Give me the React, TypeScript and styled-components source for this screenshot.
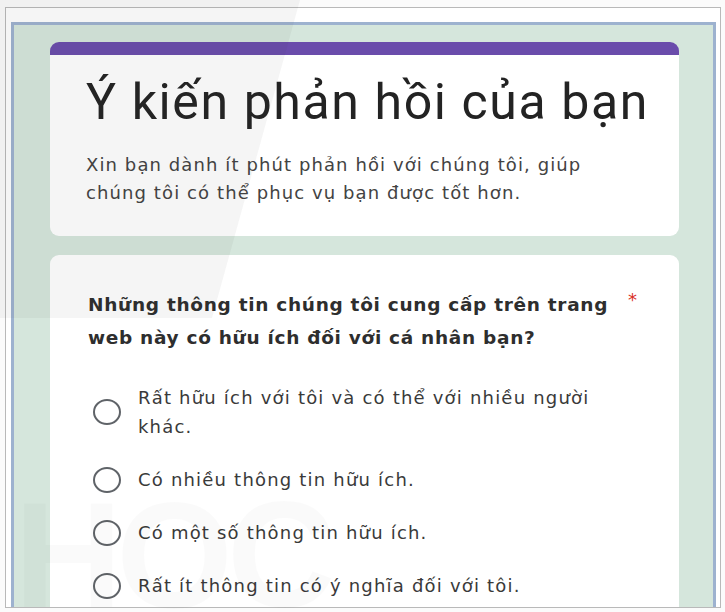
import styled, { createGlobalStyle } from 'styled-components';

const GlobalStyle = createGlobalStyle`
  html, body {
    margin: 0;
    padding: 0;
    background: #fbfbfb;
  }
  * {
    box-sizing: border-box;
  }
`;

const Page = styled.div`
  position: relative;
  width: 725px;
  height: 612px;
  padding: 7px 4px 4px 5px;
  overflow: hidden;
  font-family: 'DejaVu Sans', Verdana, sans-serif;
`;

const Frame = styled.div`
  height: 100%;
  display: flex;
  flex-direction: column;
  padding-top: 14px;
  border: 1px solid #b9b9b9;
  background: #ffffff;
`;

const FormArea = styled.div`
  flex: 1;
  display: flex;
  flex-direction: column;
  gap: 19px;
  margin: 0 4px 0 5px;
  padding: 17px 34px 0 36px;
  border: 3px solid #9db2cf;
  border-bottom: none;
  background: #d5e6dc;
  overflow: hidden;
`;

const Card = styled.section<{ $accent?: boolean }>`
  background: #ffffff;
  border-radius: 9px;
  border-top: ${(p) => (p.$accent ? '13px solid #6a4cab' : 'none')};
`;

const HeaderCard = styled(Card)`
  padding: 15px 20px 29px 36px;
`;

const Title = styled.h1`
  margin: 0;
  font-family: Roboto, 'Noto Sans', Arial, sans-serif;
  font-size: 50px;
  font-weight: 400;
  line-height: 64px;
  letter-spacing: 1.6px;
  white-space: nowrap;
  color: #232323;
`;

const Description = styled.p`
  margin: 17px 0 0;
  font-size: 18px;
  line-height: 28px;
  letter-spacing: 1.1px;
  color: #434343;
`;

const QuestionCard = styled(Card)`
  flex: 1;
  padding: 33px 42px 0 38px;
  border-radius: 9px 9px 0 0;
`;

const QuestionRow = styled.div`
  display: flex;
  align-items: flex-start;
  justify-content: space-between;
`;

const QuestionText = styled.h2`
  margin: 0;
  font-size: 18.5px;
  font-weight: 700;
  line-height: 33px;
  letter-spacing: 0.7px;
  white-space: nowrap;
  color: #2e2e2e;
`;

const Required = styled.span`
  color: #d93025;
  font-size: 18px;
  line-height: 24px;
`;

const OptionList = styled.div`
  display: flex;
  flex-direction: column;
  gap: 24px;
  margin-top: 29px;
`;

const Option = styled.label`
  display: flex;
  align-items: center;
  gap: 17px;
  padding-left: 5px;
`;

const Radio = styled.span`
  flex: none;
  width: 28px;
  height: 26px;
  border-radius: 50%;
  border: 2px solid #5f6368;
`;

const OptionText = styled.span`
  font-size: 18px;
  line-height: 29px;
  letter-spacing: 1.2px;
  white-space: nowrap;
  color: #3a3a3a;
`;

const Glare = styled.div`
  position: absolute;
  inset: 0;
  pointer-events: none;
  background: rgba(60, 60, 60, 0.05);
  clip-path: polygon(0 0, 300px 0, 212px 318px, 0 318px);
`;

const Watermark = styled.div`
  position: absolute;
  left: 14px;
  bottom: -30px;
  pointer-events: none;
  font-family: 'Liberation Sans', Arial, sans-serif;
  font-size: 150px;
  font-weight: 700;
  letter-spacing: -6px;
  color: rgba(0, 0, 0, 0.02);
`;

const options = [
  ['Rất hữu ích với tôi và có thể với nhiều người', 'khác.'],
  ['Có nhiều thông tin hữu ích.'],
  ['Có một số thông tin hữu ích.'],
  ['Rất ít thông tin có ý nghĩa đối với tôi.'],
];

export default function App() {
  return (
    <>
      <GlobalStyle />
      <Page>
        <Frame>
          <FormArea>
            <HeaderCard $accent>
              <Title>Ý kiến phản hồi của bạn</Title>
              <Description>
                Xin bạn dành ít phút phản hồi với chúng tôi, giúp
                <br />
                chúng tôi có thể phục vụ bạn được tốt hơn.
              </Description>
            </HeaderCard>
            <QuestionCard>
              <QuestionRow>
                <QuestionText>
                  Những thông tin chúng tôi cung cấp trên trang
                  <br />
                  web này có hữu ích đối với cá nhân bạn?
                </QuestionText>
                <Required>*</Required>
              </QuestionRow>
              <OptionList>
                {options.map((lines) => (
                  <Option key={lines[0]}>
                    <Radio />
                    <OptionText>
                      {lines.map((l, i) => (
                        <span key={l}>
                          {i > 0 && <br />}
                          {l}
                        </span>
                      ))}
                    </OptionText>
                  </Option>
                ))}
              </OptionList>
            </QuestionCard>
          </FormArea>
        </Frame>
        <Glare />
        <Watermark>HỌC</Watermark>
      </Page>
    </>
  );
}
